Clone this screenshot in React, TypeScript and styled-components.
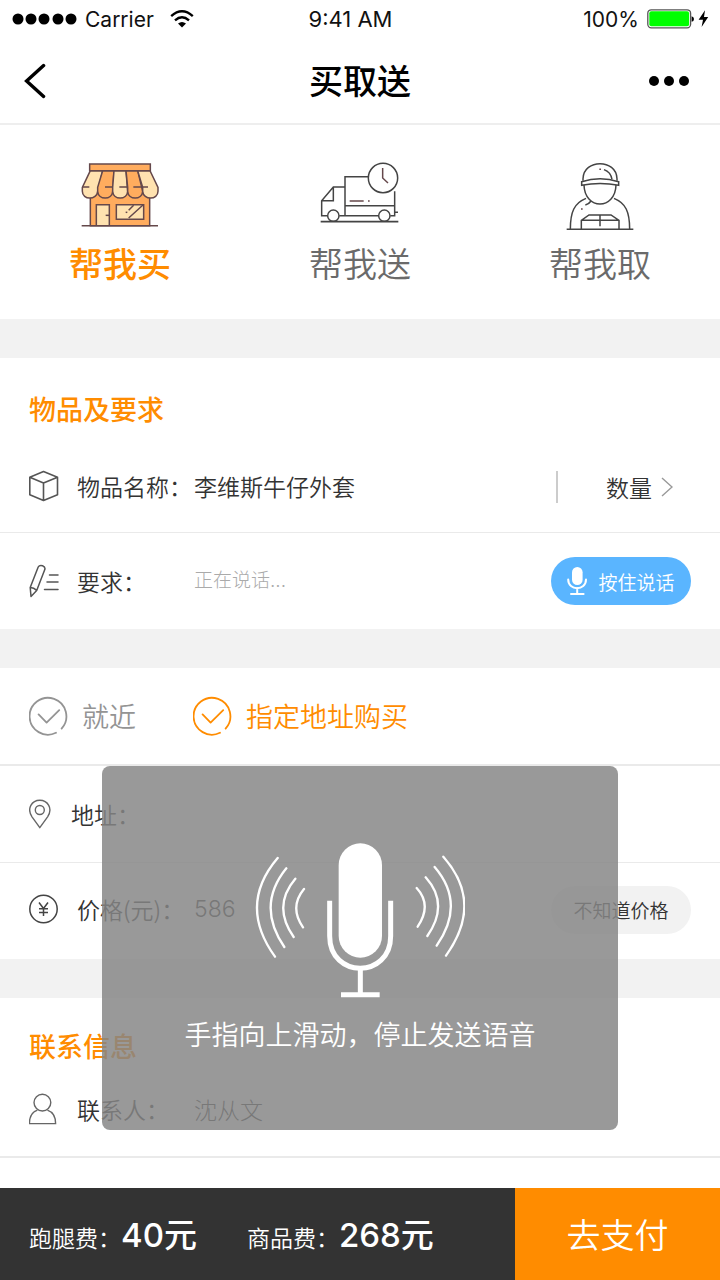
import React, { useState } from "react";
import styled, { createGlobalStyle } from "styled-components";

const ORANGE = "#ff8c00";
const INK = "#333";
const CJK = `"Noto Sans CJK SC", sans-serif`;

const GlobalStyle = createGlobalStyle`
  *, *::before, *::after { box-sizing: border-box; }
  body { margin: 0; background: #fff; font-family: ${CJK}; color: ${INK}; }
  button, input { font: inherit; color: inherit; border: 0; padding: 0; background: none; }
  button { cursor: pointer; }
  svg { display: block; flex: none; }
`;

const Page = styled.div`
  position: relative;
  display: flex;
  flex-direction: column;
  min-height: 100vh;
`;

const StatusBar = styled.div`
  display: grid;
  grid-template-columns: 1fr auto 1fr;
  align-items: center;
  height: 38px;
  padding: 0 11px 0 12px;
  font-family: Inter, sans-serif;
  font-size: 21px;
  color: #111;
`;

const StatusGroup = styled.div<{ $end?: boolean }>`
  display: flex;
  align-items: center;
  justify-content: ${(p) => (p.$end ? "flex-end" : "flex-start")};
  gap: 8px;
`;

const Carrier = styled.span`
  margin-right: 8px;
`;

const Clock = styled.time`
  margin-right: 20px;
  font-size: 22px;
`;

const NavBar = styled.header`
  display: flex;
  align-items: center;
  justify-content: space-between;
  height: 87px;
  padding: 0 24px;
  border-bottom: 2px solid #eee;
`;

const NavButton = styled.button`
  display: flex;
  align-items: center;
  width: 48px;
  height: 48px;
`;

const PageTitle = styled.h1`
  margin: 0;
  padding-bottom: 2px;
  font-size: 34px;
  line-height: 50px;
  font-weight: 500;
  color: #000;
`;

const Tabs = styled.nav`
  display: grid;
  grid-template-columns: repeat(3, 1fr);
`;

const Tab = styled.button<{ $active?: boolean }>`
  display: flex;
  flex-direction: column;
  align-items: center;
  gap: 7px;
  padding: 36px 0 31px;
  font-size: 34px;
  line-height: 50px;
  font-weight: ${(p) => (p.$active ? 500 : 350)};
  color: ${(p) => (p.$active ? ORANGE : "#6a6a6a")};
`;

const Main = styled.main`
  flex: 1;
  padding-bottom: 30px;
`;

const Section = styled.section`
  border-top: 39px solid #f2f2f2;
`;

const SectionTitle = styled.h2<{ $compact?: boolean }>`
  margin: 0;
  padding: ${(p) => (p.$compact ? "28px 29px 0" : "31px 29px 12px")};
  font-size: 27px;
  line-height: 40px;
  font-weight: 500;
  color: ${ORANGE};
`;

const Row = styled.div<{ $short?: boolean; $line?: number; $raised?: boolean }>`
  display: flex;
  align-items: center;
  height: ${(p) => (p.$short ? 92 : 96 + (p.$line ?? 0))}px;
  padding: 0 29px ${(p) => (p.$raised ? 3 : 0)}px;
  border-bottom: ${(p) => p.$line ?? 0}px solid #eaeaea;
`;

const FieldLabel = styled.label`
  display: flex;
  align-items: center;
  gap: 18px;
  flex: 0 0 165px;
  padding-bottom: 1px;
  font-size: 23px;
  line-height: 34px;
  font-weight: 350;
  white-space: nowrap;
`;

const Field = styled.input<{ $size?: number; $muted?: boolean }>`
  flex: 1;
  min-width: 0;
  height: 40px;
  padding-bottom: 1px;
  outline: none;
  font-family: Inter, ${CJK};
  font-size: ${(p) => p.$size ?? 23}px;
  font-weight: ${(p) => (p.$muted ? 300 : 350)};
  &::placeholder { color: #aaa; opacity: 1; }
`;

const Quantity = styled.button`
  display: flex;
  align-items: center;
  gap: 9px;
  height: 32px;
  padding: 0 18px 0 48px;
  border-left: 2px solid #ccc;
  font-size: 23px;
  font-weight: 350;
`;

const Pill = styled.button<{ $primary?: boolean }>`
  display: flex;
  align-items: center;
  justify-content: center;
  gap: 11px;
  flex: 0 0 140px;
  height: 48px;
  border-radius: 24px;
  font-size: 19px;
  font-weight: 350;
  color: ${(p) => (p.$primary ? "#fff" : INK)};
  background: ${(p) => (p.$primary ? "#5ab5ff" : "#f2f2f2")};
`;

const Choices = styled(Row)`
  gap: 57px;
`;

const Choice = styled.label<{ $on: boolean }>`
  display: flex;
  align-items: center;
  gap: 13px;
  font-size: 27px;
  line-height: 40px;
  font-weight: 350;
  color: ${(p) => (p.$on ? ORANGE : "#949494")};
  cursor: pointer;
`;

const HiddenRadio = styled.input`
  position: absolute;
  opacity: 0;
  width: 1px;
  height: 1px;
`;

const VoicePanel = styled.div`
  position: absolute;
  left: 0;
  right: 0;
  bottom: 150px;
  display: flex;
  flex-direction: column;
  align-items: center;
  gap: 13px;
  width: 516px;
  max-width: 90%;
  margin: 0 auto;
  padding: 76px 0;
  border-radius: 8px;
  background: rgba(134, 134, 134, 0.84);
  color: #fff;
`;

const VoiceHint = styled.p`
  margin: 0;
  font-size: 27px;
  line-height: 40px;
  font-weight: 350;
`;

const Footer = styled.footer`
  display: flex;
  height: 92px;
  background: #333;
  color: #fff;
`;

const Fees = styled.div`
  display: flex;
  flex: 1;
  align-items: center;
  gap: 50px;
  padding: 4px 0 0 29px;
  white-space: nowrap;
`;

const Fee = styled.div`
  display: flex;
  align-items: baseline;
  font-size: 23px;
  line-height: 50px;
  font-weight: 350;
`;

const Amount = styled.strong`
  font-family: Inter, ${CJK};
  font-size: 33px;
  font-weight: 500;
`;

const PayButton = styled.button`
  flex: 0 0 205px;
  padding-bottom: 2px;
  font-size: 34px;
  font-weight: 350;
  background: ${ORANGE};
`;

const SignalDots = () => (
  <svg width="65" height="12" viewBox="0 0 65 12">
    {[6, 19, 32, 46, 59].map((x) => <circle key={x} cx={x} cy="6" r="5.5" fill="#000" />)}
  </svg>
);

const WifiIcon = () => (
  <svg width="24" height="20" viewBox="0 0 24 20" fill="none" stroke="#000" strokeWidth="2.4">
    <path d="M1.2 7.2Q12-2.5 22.8 7.2M5 11.4Q12 5.2 19 11.4" />
    <path d="M8 14.6Q12 11.2 16 14.6L12 18.6Z" fill="#000" stroke="none" />
  </svg>
);

const BatteryIcon = () => (
  <svg width="62" height="20" viewBox="0 0 62 20">
    <rect x=".8" y=".8" width="42.8" height="18" rx="3.5" fill="#fff" stroke="#555" strokeWidth="1.3" />
    <rect x="2.3" y="2.3" width="39.8" height="15" rx="2" fill="#0f0" />
    <path d="M44.6 7.2Q47 7.6 47 10T44.6 12.8Z" fill="#000" />
    <path d="M58 1.2L51.6 10.8H56L54.6 18L61.2 8H57Z" fill="#000" />
  </svg>
);

const BackIcon = () => (
  <svg width="22" height="36" viewBox="0 0 22 36" fill="none" stroke="#000" strokeWidth="3.4" strokeLinecap="round" strokeLinejoin="miter">
    <path d="M19.6 2.6L2.6 18L19.6 33.4" />
  </svg>
);

const MoreIcon = () => (
  <svg width="48" height="12" viewBox="0 0 48 12">
    {[6, 21, 36].map((x) => <circle key={x} cx={x} cy="6" r="5" fill="#000" />)}
  </svg>
);

const ShopIcon = () => (
  <svg width="80" height="70" viewBox="60 33 240 210" fill="none" stroke="#65484b" strokeWidth="4.5">
    <path d="M91 130H269V227H91Z" fill="#ffac5e" />
    <path d="M109 227V164H148V227" fill="#ffe2b0" />
    <path d="M137 196H148" />
    <path d="M169 164H251V208H169Z" fill="#ffe2b0" />
    <path d="M206 204L249 165M206 181L221 166" />
    <path d="M197 187h5" />
    <path d="M91 62L67 112V124C67 151 111 151 113 124L128 62Z" fill="#ffe2b0" />
    <path d="M128 62L113 112V124C115 151 156 151 158 124L162 62Z" fill="#ffac5e" />
    <path d="M162 62L158 112V124C160 151 201 151 203 124L198 62Z" fill="#ffe2b0" />
    <path d="M198 62L203 112V124C205 151 246 151 248 124L233 62Z" fill="#ffac5e" />
    <path d="M233 62L248 112V124C250 151 294 151 294 124V112L270 62Z" fill="#ffe2b0" />
    <path d="M89 42H271V62H89Z" fill="#ffac5e" />
    <path d="M67 111H88M135 111H158M178 111H202M220 111H264M65 227H294" />
  </svg>
);

const TruckIcon = () => (
  <svg width="80" height="70" viewBox="60 33 240 210" fill="none" stroke="#444" strokeWidth="4.5">
    <path d="M135 197V80H207M284 124V197H271M235 197H118M82 197H65V152L100 111H135M100 111V152H65M135 167H284M284 187H294" />
    <path d="M62 215H295" strokeWidth="5" />
    <circle cx="100" cy="197" r="17" />
    <circle cx="253" cy="197" r="17" />
    <circle cx="249" cy="84" r="44" fill="#fff" />
    <path d="M248 54V84L264 99M149 153H191M204 153H209" stroke="#65484b" />
  </svg>
);

const CourierIcon = () => (
  <svg width="80" height="70" viewBox="60 33 240 210" fill="none" stroke="#444" strokeWidth="4.5">
    <path d="M129 92V86C131 26 229 26 231 86V92" />
    <path d="M125 106V95Q180 77 236 95V106Q180 95 125 106Z" />
    <path d="M132 105C134 181 226 181 228 105M192 59Q212 66 216 88" />
    <path d="M138 145C103 159 91 185 91 238M222 145C257 159 269 185 269 238M136 165Q147 162 153 153" />
    <path d="M80 238H280M124 238V211L147 195H213L237 211V238M124 211H237M180 195V229" />
    <path d="M178 58h5M123 177h5" stroke="#65484b" />
  </svg>
);

const BoxIcon = () => (
  <svg width="30" height="32" viewBox="0 0 30 32" fill="none" stroke="#555" strokeWidth="1.6" strokeLinejoin="round">
    <path d="M14.5 1.5L28.5 7.2V24.8L14.5 30.5L.8 24.8V7.2ZM.8 7.2L14.5 13L28.5 7.2M14.5 13V30.5" />
  </svg>
);

const PencilIcon = () => (
  <svg width="30" height="34" viewBox="0 0 30 34" fill="none" stroke="#555" strokeWidth="1.5" strokeLinejoin="round" strokeLinecap="round">
    <path d="M1.2 23.5L9.2 3Q10.4 .8 13.6 1.7Q16.6 2.8 15.8 5.6L7.7 26.4L2 32.4ZM1.2 23.5Q4.6 23.4 7.7 26.4M20.5 11H29M18 18H29M15.5 25.5H29" />
  </svg>
);

const PinIcon = () => (
  <svg width="24" height="30" viewBox="0 0 24 30" fill="none" stroke="#666" strokeWidth="1.4" strokeLinejoin="round">
    <path d="M10.8 28.7L3 17.8C-2.6 9.4 3 1.2 10.8 1.2S24.2 9.4 18.6 17.8Z" />
    <circle cx="10.8" cy="11" r="4.5" />
  </svg>
);

const YuanIcon = () => (
  <svg width="30" height="30" viewBox="0 0 30 30" fill="none" stroke="#444" strokeWidth="1.5">
    <circle cx="14.5" cy="15" r="13.7" />
    <path d="M10 8.5L14.5 14.5L19 8.5M14.5 14.5V22M10 14.7H19M10 18.4H19" />
  </svg>
);

const PersonIcon = () => (
  <svg width="30" height="32" viewBox="0 0 30 32" fill="none" stroke="#666" strokeWidth="1.4">
    <circle cx="13.4" cy="9.6" r="8.4" />
    <path d="M8.4 17.2C3.2 19 .4 23.5 .4 30.6H26.6C26.6 23.5 23.6 19 18.4 17.2" />
  </svg>
);

const ChevronIcon = () => (
  <svg width="12" height="20" viewBox="0 0 12 20" fill="none" stroke="#999" strokeWidth="1.4">
    <path d="M1 1L11 10L1 19" />
  </svg>
);

const SmallMicIcon = () => (
  <svg width="20" height="28" viewBox="0 0 20 28" fill="none" stroke="#fff" strokeWidth="2" strokeLinecap="round">
    <rect x="5" y="0" width="10.6" height="18" rx="5.3" fill="#fff" stroke="none" />
    <path d="M1.2 12.5C1.2 24 19 24 19 12.5M10.2 21V27M4 27H16.6" />
  </svg>
);

const CheckIcon = () => (
  <svg width="40" height="40" viewBox="0 0 40 40" fill="none" stroke="currentColor" strokeWidth="1.8" strokeLinecap="round" strokeLinejoin="round">
    <path d="M27 36.8A18.4 18.4 0 1 1 32.6 32.6M9.6 18.4L17.6 26.6L30.2 14.2" />
  </svg>
);

const VoiceIcon = () => (
  <svg width="210" height="159" viewBox="45 36 630 477" fill="none" stroke="#fff">
    <rect x="296" y="40" width="130" height="343" rx="65" fill="#fff" stroke="none" />
    <path d="M269 212V318C269 447 452 447 452 318V212" strokeWidth="15" />
    <path d="M361 418V494M303 494H419" strokeWidth="15" />
    <g strokeWidth="7" strokeLinecap="round">
      <path d="M192 177Q147 231 189 292M166 146Q96 228 161 321M139 115Q48 227 133 351M113 84Q-7 225 105 380" />
      <path d="M530 174Q577 225 533 290M557 142Q629 222 562 318M584 111Q678 221 590 347M610 80Q732 218 618 377" />
    </g>
  </svg>
);

export default function App() {
  const [nearby, setNearby] = useState(false);

  return (
    <Page>
      <GlobalStyle />
      <StatusBar>
        <StatusGroup>
          <SignalDots />
          <Carrier>Carrier</Carrier>
          <WifiIcon />
        </StatusGroup>
        <Clock>9:41 AM</Clock>
        <StatusGroup $end>
          <span>100%</span>
          <BatteryIcon />
        </StatusGroup>
      </StatusBar>

      <NavBar>
        <NavButton aria-label="返回"><BackIcon /></NavButton>
        <PageTitle>买取送</PageTitle>
        <NavButton aria-label="更多"><MoreIcon /></NavButton>
      </NavBar>

      <Tabs>
        <Tab $active><ShopIcon />帮我买</Tab>
        <Tab><TruckIcon />帮我送</Tab>
        <Tab><CourierIcon />帮我取</Tab>
      </Tabs>

      <Main>
        <Section>
          <SectionTitle>物品及要求</SectionTitle>
          <Row $short $line={1}>
            <FieldLabel htmlFor="item"><BoxIcon />物品名称：</FieldLabel>
            <Field id="item" defaultValue="李维斯牛仔外套" />
            <Quantity>数量<ChevronIcon /></Quantity>
          </Row>
          <Row>
            <FieldLabel htmlFor="request"><PencilIcon />要求：</FieldLabel>
            <Field id="request" $size={19} $muted placeholder="正在说话..." />
            <Pill $primary><SmallMicIcon />按住说话</Pill>
          </Row>
        </Section>

        <Section>
          <Choices $line={2}>
            <Choice $on={nearby}>
              <HiddenRadio type="radio" name="place" checked={nearby} onChange={() => setNearby(true)} />
              <CheckIcon />就近
            </Choice>
            <Choice $on={!nearby}>
              <HiddenRadio type="radio" name="place" checked={!nearby} onChange={() => setNearby(false)} />
              <CheckIcon />指定地址购买
            </Choice>
          </Choices>
          <Row $line={1}>
            <FieldLabel htmlFor="address"><PinIcon />地址：</FieldLabel>
            <Field id="address" />
          </Row>
          <Row $raised>
            <FieldLabel htmlFor="price"><YuanIcon />价格(元)：</FieldLabel>
            <Field id="price" $muted defaultValue="586" />
            <Pill>不知道价格</Pill>
          </Row>
        </Section>

        <Section>
          <SectionTitle $compact>联系信息</SectionTitle>
          <Row $short $line={2} $raised>
            <FieldLabel htmlFor="contact"><PersonIcon />联系人：</FieldLabel>
            <Field id="contact" $muted defaultValue="沈从文" />
          </Row>
        </Section>
      </Main>

      <Footer>
        <Fees>
          <Fee>跑腿费：<Amount>40元</Amount></Fee>
          <Fee>商品费：<Amount>268元</Amount></Fee>
        </Fees>
        <PayButton>去支付</PayButton>
      </Footer>

      <VoicePanel role="status">
        <VoiceIcon />
        <VoiceHint>手指向上滑动，停止发送语音</VoiceHint>
      </VoicePanel>
    </Page>
  );
}
